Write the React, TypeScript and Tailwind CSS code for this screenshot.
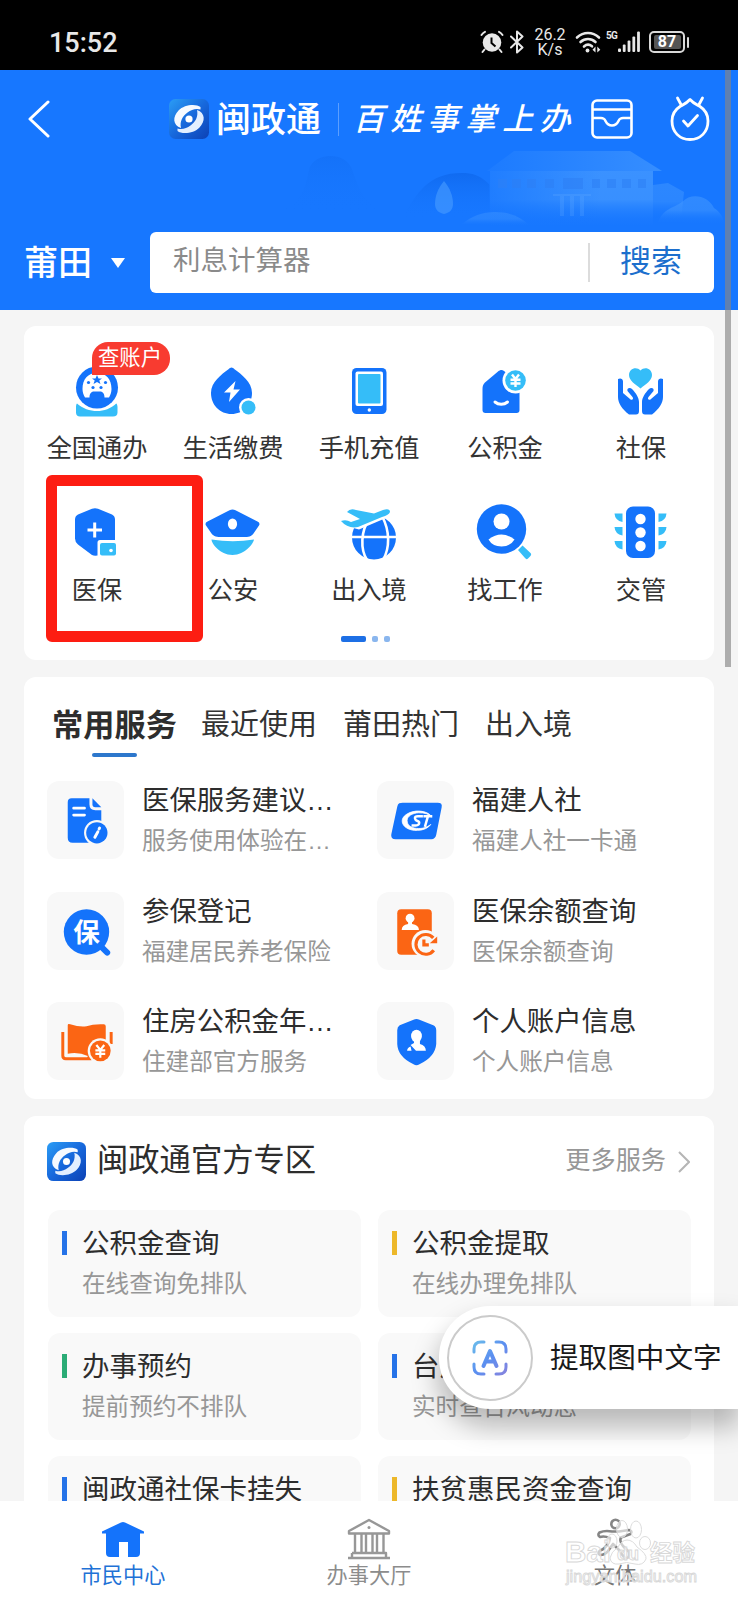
import React from 'react';

const B = '#1473fb';
const C = '#35bdf8';
const O = '#fb6514';

function Logo({ id, className }: { id: string; className: string }) {
  return (
    <svg viewBox="0 0 40 40" className={className}>
      <defs>
        <linearGradient id={id} x1="0" y1="0" x2="1" y2="1">
          <stop offset="0" stopColor="#2b9df5" />
          <stop offset="0.5" stopColor="#1768dc" />
          <stop offset="1" stopColor="#0c41b4" />
        </linearGradient>
      </defs>
      <rect width="40" height="40" rx="6.500" fill={`url(#${id})`} />
      <path d="M31.500 8C27 4.500 15 5.500 9.500 11.500C3.500 18 3.500 26 12 29C10.500 22.500 13.500 17 18.500 13.500C22.500 10.500 27 9 31.500 10.500Z" fill="#f6faff" />
      <path d="M8.500 32C13 35.500 25 34.500 30.500 28.500C36.500 22 36.500 14 28 11C29.500 17.500 26.500 23 21.500 26.500C17.500 29.500 13 31 8.500 29.500Z" fill="#e3efff" />
      <circle cx="20" cy="20" r="3.600" fill="#fff" />
    </svg>
  );
}

function Skyline() {
  return (
    <svg viewBox="0 0 738 240" className="absolute left-0 top-0 h-[240px] w-[738px]">
      <defs>
        <linearGradient id="wall" x1="0" y1="0" x2="0" y2="1">
          <stop offset="0" stopColor="#4a9dff" stopOpacity="0.7" />
          <stop offset="0.5" stopColor="#4a9dff" stopOpacity="0.65" />
          <stop offset="1" stopColor="#1777ff" stopOpacity="0" />
        </linearGradient>
        <linearGradient id="roof" x1="0" y1="0" x2="1" y2="0">
          <stop offset="0" stopColor="#4a9dff" stopOpacity="0.1" />
          <stop offset="1" stopColor="#4a9dff" stopOpacity="0.6" />
        </linearGradient>
        <linearGradient id="side" x1="0" y1="0" x2="1" y2="0">
          <stop offset="0" stopColor="#1777ff" stopOpacity="0.75" />
          <stop offset="1" stopColor="#1777ff" stopOpacity="0" />
        </linearGradient>
        <linearGradient id="hill" x1="0" y1="0" x2="0" y2="1">
          <stop offset="0" stopColor="#0f69ee" />
          <stop offset="1" stopColor="#1777ff" stopOpacity="0" />
        </linearGradient>
      </defs>
      <path d="M272 140C300 138 305 120 309 100C312 88 325 86 331 86C339 86 349 89 353 102C360 122 366 138 390 142Z" fill="url(#hill)" opacity="0.35" />
      <path d="M402 148C418 122 428 103 462 103C482 103 492 112 510 148Z" fill="url(#hill)" opacity="0.85" />
      <path d="M514 81H630L662 101H487Z" fill="url(#roof)" />
      <path d="M490 101H653V158H490Z" fill="url(#wall)" />
      <path d="M653 115L668 113L684 122L681 150H653Z" fill="url(#wall)" opacity="0.6" />
      <path d="M489 101H600V158H489Z" fill="url(#side)" />
      <g fill="#2d7ff5" opacity="0.55">
        <rect x="498" y="109" width="9" height="9" /><rect x="512" y="109" width="9" height="9" />
        <rect x="527" y="109" width="9" height="9" /><rect x="545" y="109" width="9" height="9" />
        <rect x="563" y="108" width="20" height="11" /><rect x="592" y="109" width="8" height="9" />
        <rect x="607" y="109" width="9" height="9" /><rect x="622" y="109" width="9" height="9" />
        <rect x="638" y="109" width="8" height="9" />
      </g>
      <g fill="#69b0ff" opacity="0.22">
        <rect x="553" y="124" width="38" height="2" /><rect x="560" y="126" width="4" height="20" />
        <rect x="570" y="126" width="4" height="20" /><rect x="580" y="126" width="4" height="20" />
      </g>
      <path d="M658 152C664 138 674 138 682 132C692 122 708 126 714 138C720 142 724 148 724 154Z" fill="url(#wall)" opacity="0.7" />
      <path d="M462 154C472 146 482 142 495 142C512 142 522 148 530 156Z" fill="url(#wall)" opacity="0.5" />
      <path d="M444 111C438 118 435 126 435 134C435 140 439 143 444 144C449 143 453 140 453 134C453 126 450 118 444 111Z" fill="#4a9dff" opacity="0.6" />
    </svg>
  );
}

function StatusBar() {
  return (
    <div className="flex h-[70px] items-start bg-black text-[#e8e8e8]">
      <span className="ml-[49px] mt-[26px] font-['Roboto'] text-[27px] font-medium leading-[34px]">15:52</span>
      <div className="ml-auto mr-[49px] mt-[24px] flex h-[36px] items-center">
        <svg viewBox="0 0 24 24" className="h-[24px] w-[24px]" fill="#e8e8e8">
          <circle cx="12" cy="12.500" r="9.300" />
          <path d="M4.500 19.500L2.500 22M19.500 19.500L21.500 22M1.500 5C2.500 3.500 3.500 2.500 5 1.800M22.500 5C21.500 3.500 20.500 2.500 19 1.800" stroke="#e8e8e8" strokeWidth="2" strokeLinecap="round" fill="none" />
          <path d="M11.500 7.500V13L15.500 16.500" stroke="#000" strokeWidth="2" fill="none" />
        </svg>
        <svg viewBox="0 0 14 24" className="ml-[6px] h-[24px] w-[14px]" fill="none" stroke="#e8e8e8" strokeWidth="2" strokeLinejoin="round" strokeLinecap="round">
          <path d="M1 6.500L12.500 17.500L7 22.500V1.500L12.500 6.500L1 17.500" />
        </svg>
        <span className="ml-[10px] flex w-[32px] flex-col text-center font-['Roboto'] text-[16px] leading-[15px]">
          <span>26.2</span><span>K/s</span>
        </span>
        <svg viewBox="0 0 26 24" className="ml-[9px] h-[24px] w-[26px]" fill="none" stroke="#e8e8e8" strokeWidth="2.600" strokeLinecap="round">
          <path d="M2 7.500C8.500 1.500 17.500 1.500 24 7.500M5.500 12C10 8 16 8 20.500 12M9 16.500C11.500 14.200 14.500 14.200 17 16.300" />
          <circle cx="12.500" cy="20.500" r="1.900" fill="#e8e8e8" stroke="none" />
          <path d="M20.500 16.500V22.500L17.500 19.800ZM22.300 16.500V22.500L25.300 19.800Z" fill="#e8e8e8" stroke="none" />
        </svg>
        <span className="-mt-[12px] ml-[5px] w-[12px] font-['Roboto'] text-[10px] font-bold leading-[10px] tracking-[-0.8px]">5G</span>
        <svg viewBox="0 0 22 24" className="h-[24px] w-[22px]" fill="#e8e8e8">
          <rect x="0" y="18.500" width="3" height="3.500" rx="1" /><rect x="4.800" y="14.500" width="2.800" height="7.500" rx="1" />
          <rect x="9.600" y="10.500" width="2.800" height="11.500" rx="1" /><rect x="14.400" y="6.500" width="2.800" height="15.500" rx="1" />
          <rect x="19.100" y="1.500" width="2.800" height="20.500" rx="1" />
        </svg>
        <span className="ml-[9px] flex h-[22px] w-[36px] items-center justify-center rounded-[5px] border-2 border-[#d8d8d8]">
          <span className="flex h-[14px] w-[27px] items-center justify-center rounded-[2px] bg-[#555] font-['Roboto'] text-[16px] font-bold leading-[14px] text-white">87</span>
        </span>
        <span className="ml-[2px] h-[11px] w-[2px] rounded bg-[#d8d8d8]" />
      </div>
    </div>
  );
}

function Header() {
  return (
    <header className="relative h-[240px] bg-[#1777ff] text-white">
      <Skyline />
      <div className="relative flex h-[98px] items-center pl-[28px] pr-[28px]">
        <svg viewBox="0 0 22 38" className="h-[38px] w-[22px]" fill="none" stroke="#fff" strokeWidth="3" strokeLinecap="round" strokeLinejoin="round">
          <path d="M20 2L2 19L20 36" />
        </svg>
        <Logo id="logo-top" className="ml-[119px] h-[40px] w-[40px]" />
        <span className="ml-[7px] -mt-[4px] text-[35px] font-medium leading-[44px]">闽政通</span>
        <span className="ml-[17px] h-[33px] w-px bg-[#5c9fff]" />
        <span className="ml-[14px] mt-[2px] w-[226px] whitespace-nowrap font-['Liberation_Serif','Noto_Sans_CJK_SC',serif] text-[31px] font-medium italic leading-[40px] tracking-[6.300px]">百姓事掌上办</span>
        <svg viewBox="0 0 42 40" className="ml-[12px] h-[40px] w-[42px]" fill="none" stroke="#fff" strokeWidth="2.600" strokeLinejoin="round">
          <rect x="1.500" y="1.500" width="39" height="37" rx="4.500" />
          <path d="M1.500 10.500H40.500M1.500 19H10C13 19 13.500 20 14.500 22C16 25 18 26.500 21 26.500C24 26.500 26 25 27.500 22C28.500 20 29 19 32 19H40.500" />
        </svg>
        <svg viewBox="0 0 40 46" className="ml-auto h-[46px] w-[40px]" fill="none" stroke="#fff" strokeWidth="2.800" strokeLinecap="round" strokeLinejoin="round">
          <path d="M20 3.500C17 7 13.500 8.500 10 10.500C4.500 14 2 19 2 25C2 36 9.500 43.500 20 43.500C30.500 43.500 38 36 38 25C38 19 35.500 14 30 10.500C26.500 8.500 23 7 20 3.500Z" />
          <path d="M7.500 2L11 8.500M32.500 2L29 8.500M13.500 25L18 30L27.500 19.500" />
        </svg>
      </div>
      <div className="relative mt-[64px] flex h-[61px] items-center pl-[24px] pr-[24px]">
        <span className="-mt-[4px] w-[68px] whitespace-nowrap text-[34px] font-medium leading-[44px]">莆田</span>
        <svg viewBox="0 0 14 10" className="ml-[19px] h-[10px] w-[14px]" fill="#fff"><path d="M0 0H14L7 10Z" /></svg>
        <div className="ml-[25px] flex h-[61px] w-[564px] items-center rounded-[6px] bg-white">
          <span className="-mt-[9px] ml-[23px] text-[27.500px] leading-[36px] text-[#8a8a8a]">利息计算器</span>
          <span className="ml-auto h-[39px] w-[2px] bg-[#dcdcdc]" />
          <span className="-mt-[7px] ml-[30px] mr-[32px] text-[31px] leading-[40px] text-[#1c6fcd]">搜索</span>
        </div>
      </div>
    </header>
  );
}

const main: { label: string; icon: React.ReactNode }[] = [
  {
    label: '全国通办',
    icon: (
      <>
        <path d="M9 38.500C8.300 39 8 40.500 8 42V47.500C8 50 9.500 51.500 12 51.500H45C48 51.500 49.500 50 49.500 47.500V42C49.500 40.500 49 39 48.300 38.500C43 43.500 36 46 29 46C22 46 14.500 43.500 9 38.500Z" fill={C} />
        <circle cx="29" cy="22.500" r="21" fill={B} />
        <path d="M14.500 24C14.500 14 20 8 29 8C38 8 43.500 14 43.500 24C43.500 27 42.500 30 41 32.500H36.500C36.500 29 35 26.500 32 26.500H26C23 26.500 21.500 29 21.500 32.500H17C15.500 30 14.500 27 14.500 24Z" fill="#fff" />
        <path d="M29 10L30.500 13.500H34L31.300 15.500L32.500 19L29 17L25.500 19L26.700 15.500L24 13.500H27.500Z" fill={B} />
        <circle cx="20.500" cy="17.500" r="1.600" fill={B} /><circle cx="37.500" cy="17.500" r="1.600" fill={B} />
        <circle cx="25" cy="22.500" r="1.600" fill={B} /><circle cx="33" cy="22.500" r="1.600" fill={B} />
      </>
    ),
  },
  {
    label: '生活缴费',
    icon: (
      <>
        <path d="M27.500 2.500C28.500 2.500 29.500 3.300 30.500 4.300C37.500 9.500 48 17 48 28C48 40 39 49 27.500 49C16 49 7 40 7 28C7 17 17.500 9.500 24.500 4.300C25.500 3.300 26.500 2.500 27.500 2.500Z" fill={B} />
        <path d="M31.500 16L20 27.500H26.500L25 37L36 24.500H29.500Z" fill="#fff" />
        <circle cx="44.500" cy="42.500" r="9.500" fill="#fff" /><circle cx="44.500" cy="42.500" r="7" fill={C} />
      </>
    ),
  },
  {
    label: '手机充值',
    icon: (
      <>
        <rect x="12" y="3" width="34.500" height="46" rx="4.500" fill={B} />
        <rect x="15.500" y="6.500" width="27.500" height="34.500" rx="2" fill="#fff" />
        <rect x="18" y="9" width="22.500" height="29.500" rx="1" fill={C} />
        <circle cx="29.300" cy="45" r="1.700" fill="#fff" />
      </>
    ),
  },
  {
    label: '公积金',
    icon: (
      <>
        <path d="M6.500 24C6.500 21 7 19.500 9 17.500L22 6.500C24.500 4.500 26 4.500 28 6L43.500 18V45C43.500 47 42.500 48 40.500 48H9.500C7.500 48 6.500 47 6.500 45Z" fill={B} />
        <path d="M19 37C22.500 40 28 40 31.500 37" stroke="#fff" strokeWidth="3" strokeLinecap="round" fill="none" />
        <circle cx="39.500" cy="15.500" r="13" fill="#fff" /><circle cx="39.500" cy="15.500" r="10.300" fill={C} />
        <path d="M36 9.500L39.500 14L43 9.500M34.500 14.800H44.500M34.500 18.500H44.500M39.500 14V22" stroke="#fff" strokeWidth="2.400" fill="none" />
      </>
    ),
  },
  {
    label: '社保',
    icon: (
      <>
        <path d="M28.500 23.500C23 19 17 15.500 17 10C17 3.500 24.500 1 28.500 5.500C32.500 1 40 3.500 40 10C40 15.500 34 19 28.500 23.500Z" fill={C} />
        <path d="M6 14C8.500 12.500 11 14 11 16.500V28L18 34C20 36 22 34 20.500 32L15.500 26C14.500 23 18 22 20 24C24 28 27 33 27 37V46C27 48.500 26 49.500 24 49.500H17C10 44 6 38 6 32Z" fill={B} />
        <path d="M51 14C48.500 12.500 46 14 46 16.500V28L39 34C37 36 35 34 36.500 32L41.500 26C42.500 23 39 22 37 24C33 28 30 33 30 37V46C30 48.500 31 49.500 33 49.500H40C47 44 51 38 51 32Z" fill={B} />
      </>
    ),
  },
  {
    label: '医保',
    icon: (
      <>
        <path d="M24 1.800Q27 0.500 30 1.800L44 7.500Q47 9 47 12.500V33H32Q29.500 33 29.500 35.500V48.500Q26 49 24 48L10 37.500Q7 35 7 31.500V12.500Q7 9 10 7.500Z" fill={B} />
        <path d="M19.500 23H34M26.700 15.500V30.500" stroke="#fff" strokeWidth="3" />
        <rect x="32" y="36" width="16" height="12.500" rx="2" fill={C} /><circle cx="43" cy="43.500" r="1.800" fill="#fff" />
      </>
    ),
  },
  {
    label: '公安',
    icon: (
      <>
        <path d="M25.500 3.200Q28.500 1.800 31.500 3.200L53.500 14.500Q56.500 16 55 18.500L49.500 26.500C47.500 29.500 44.500 30 39.500 30H17.500C13.500 30 9.500 29.500 7.500 26.500L2 18.500Q0.500 16 3.500 14.500Z" fill={B} />
        <path d="M7.500 32.500Q29 36 50 32.500C49.500 36 41.500 48 28.500 48C15.500 48 7.500 36 7.500 32.500Z" fill={C} />
        <ellipse cx="28.500" cy="17" rx="4.600" ry="5.500" fill="#fff" />
      </>
    ),
  },
  {
    label: '出入境',
    icon: (
      <>
        <circle cx="34" cy="30.500" r="22" fill={B} />
        <path d="M10 30H58M27 53C20 42 21 24 29 12M43 53C50 41 50 24 42 9" stroke="#fff" strokeWidth="2.600" fill="none" />
        <path d="M2 18L48 0L53 8L19 22.500Z" fill="#fff" />
        <path d="M1 14Q6 12 11 15L20 12L7 5Q10 1 16 3L34 6.500L43 3Q50 1 50 5Q49 8 42 10L18 20Q8 22 1 14Z" fill={C} />
      </>
    ),
  },
  {
    label: '找工作',
    icon: (
      <>
        <circle cx="25.500" cy="22" r="24.700" fill={B} /><circle cx="25.500" cy="14.500" r="8" fill="#fff" />
        <path d="M12.500 32.500Q25.500 22.500 38.500 32.500Q34.500 39.500 25.500 39.500Q16.500 39.500 12.500 32.500Z" fill="#fff" />
        <path d="M42 43L46.500 38.500L54.500 46Q56 47.500 54 49.500L52 51.500Q50.500 53 49 51Z" fill={C} />
      </>
    ),
  },
  {
    label: '交管',
    icon: (
      <>
        <rect x="14" y="-0.500" width="29" height="51.500" rx="7" fill={B} />
        <circle cx="28.500" cy="12" r="5.200" fill="#fff" /><circle cx="28.500" cy="25.500" r="5.200" fill="#fff" /><circle cx="28.500" cy="39" r="5.200" fill="#fff" />
        <path d="M2.500 6.500H10.500V15Q3 13.500 2.500 6.500ZM2.500 20H10.500V28.500Q3 27 2.500 20ZM2.500 34H10.500V42.500Q3 41 2.500 34ZM54.500 6.500H46.500V15Q54 13.500 54.500 6.500ZM54.500 20H46.500V28.500Q54 27 54.500 20ZM54.500 34H46.500V42.500Q54 41 54.500 34Z" fill={C} />
      </>
    ),
  },
];

function MainServices() {
  return (
    <section className="relative mx-[24px] mt-[16px] h-[334px] rounded-[12px] bg-white px-[5px] pt-[39px]">
      <div className="grid grid-cols-5 gap-y-[42px]">
        {main.map((m) => (
          <div key={m.label} className="flex h-[100px] flex-col items-center">
            <svg viewBox="0 0 58 58" className="h-[58px] w-[58px] overflow-visible">{m.icon}</svg>
            <span className="mt-[5px] whitespace-nowrap text-[25.200px] leading-[36px] text-[#333]">{m.label}</span>
          </div>
        ))}
      </div>
      <div className="mt-[29px] flex items-center justify-center gap-[6px] pr-[7px]">
        <span className="h-[6px] w-[25px] rounded-[2px] bg-[#1d6fe5]" />
        <span className="h-[6px] w-[6px] rounded-[2px] bg-[#8ab6ee]" />
        <span className="h-[6px] w-[6px] rounded-[2px] bg-[#8ab6ee]" />
      </div>
      <span className="absolute left-[68px] top-[16px] flex h-[33px] w-[78px] items-start justify-center rounded-[16px] rounded-bl-none bg-[#f83b30] pr-[2px] text-[21.300px] leading-[27px] text-white">查账户</span>
      <span className="absolute left-[22px] top-[149px] h-[167px] w-[157px] rounded-[6px] border-[11px] border-[#fd1d12]" />
    </section>
  );
}

const common: { title: string; sub: string; icon: React.ReactNode }[] = [
  {
    title: '医保服务建议…', sub: '服务使用体验在…',
    icon: (
      <>
        <path d="M25 17H43V23Q43 29 49 29H55V62H26Q21 62 21 57V21Q21 17 25 17Z" fill={B} />
        <path d="M46 17L55 26H49Q46 26 46 23Z" fill={B} />
        <path d="M27 27H38M27 34H38" stroke="#fff" strokeWidth="2.800" strokeLinecap="round" />
        <circle cx="50.500" cy="52" r="13" fill="#f8f8f8" /><circle cx="50.500" cy="52" r="10.800" fill={B} />
        <path d="M48.500 56.500L51.500 51M52.800 48L53.200 47.200" stroke="#fff" strokeWidth="3" strokeLinecap="round" />
      </>
    ),
  },
  {
    title: '福建人社', sub: '福建人社一卡通',
    icon: (
      <>
        <path d="M22.500 22Q23.500 21.500 26 21.500H61.500Q66.500 21.500 65.500 26L60 54Q59 58.500 55 58.500H19Q13.500 58.500 14.500 53.500L20.500 25.500Q21 23 22.500 22Z" fill={B} />
        <path d="M55.500 36C53 31.500 46 29.500 39.500 30C31 31 25.500 35.500 25.500 40C25.500 46 33 50 41 49.500C47 49.500 52 47 54.500 43.500C50 47 45 48 40 47.500C34 47 30.500 44 30.500 39.500C30.500 35 36 32 42 31.700C48 31.500 52.500 33 55.500 36Z" fill="#fff" stroke="#fff" strokeWidth="0.800" />
        <path d="M46.500 35.200H41.500Q38 35.200 38.500 37.500Q38.800 39.300 41 40Q43.500 40.900 42.500 43Q41.500 45 35 44.600M47 35.200H56M51.500 35.500L48.500 46" stroke="#fff" strokeWidth="2.500" fill="none" />
      </>
    ),
  },
  {
    title: '参保登记', sub: '福建居民养老保险',
    icon: (
      <>
        <circle cx="40" cy="40" r="23" fill={B} />
        <path d="M52 52L61 61" stroke={B} strokeWidth="6" strokeLinecap="round" />
        <text x="40" y="50" textAnchor="middle" fontSize="27" fontWeight="700" fill="#fff" fontFamily="Noto Sans CJK SC">保</text>
      </>
    ),
  },
  {
    title: '医保余额查询', sub: '医保余额查询',
    icon: (
      <>
        <rect x="20.500" y="17" width="35" height="46" rx="4" fill={O} />
        <circle cx="33.500" cy="26" r="4.500" fill="#fff" /><path d="M31.500 28H35.500V32Q42.500 33 42.500 38H25Q25 33 31.500 32Z" fill="#fff" />
        <circle cx="49" cy="52" r="14" fill="#f8f8f8" />
        <path d="M57 46A10 10 0 1 0 57.500 58.500" fill="none" stroke={O} strokeWidth="3.200" />
        <path d="M61 44.500V51.500H53.500Z" fill={O} />
        <path d="M47.500 47.500V53H52.500" fill="none" stroke={O} strokeWidth="3.200" />
      </>
    ),
  },
  {
    title: '住房公积金年…', sub: '住建部官方服务',
    icon: (
      <>
        <path d="M16 30V54Q16 57 19 57H45L41 55M65 30V42" stroke={O} strokeWidth="3" fill="none" />
        <path d="M21 23Q21 21 23.500 22Q33 25 40 24Q47 21.500 57.500 22Q59.500 22 59.500 24V52Q50 57 42 54.500Q31 49.500 21 52Z" fill={O} />
        <circle cx="54" cy="49" r="12.800" fill="#f8f8f8" /><circle cx="54" cy="49" r="10.500" fill={O} />
        <path d="M50 43L54 48L58 43M49 48.500H59M49 52H59M54 48V56" stroke="#fff" strokeWidth="2.200" fill="none" />
      </>
    ),
  },
  {
    title: '个人账户信息', sub: '个人账户信息',
    icon: (
      <>
        <path d="M37 17.500Q40 16 43 17.500L57 23Q60 24.500 60 28V42Q59 55 43 62.500Q40 64.500 37 62.500Q21 55 20.500 42V28Q20.500 24.500 23 23Z" fill={B} />
        <ellipse cx="40" cy="34" rx="5.500" ry="6.500" fill="#fff" />
        <path d="M37.500 37H43.500V42Q49.500 43.500 49.500 49H39.500L34 43L37.500 41ZM34 44.500L35 49H30.500Q30.500 46 34 44.500Z" fill="#fff" />
      </>
    ),
  },
];

function CommonServices() {
  return (
    <section className="mx-[24px] mt-[17px] h-[422px] rounded-[12px] bg-white pl-[23px] pr-[22px]">
      <div className="flex h-[104px] whitespace-nowrap pl-[5px] pt-[25px] text-[29px] leading-[40px] text-[#333]">
        <div className="flex w-[125px] flex-col items-center">
          <span className="text-[31.200px] font-bold leading-[42px] text-[#2d2d2d]">常用服务</span>
          <span className="mt-[9px] h-[4px] w-[45px] rounded bg-[#2d77cc]" />
        </div>
        <span className="ml-[24px]">最近使用</span>
        <span className="ml-[26px]">莆田热门</span>
        <span className="ml-[26px]">出入境</span>
      </div>
      <div className="grid grid-cols-[330px_1fr] gap-y-[32.700px]">
        {common.map((c) => (
          <div key={c.title} className="flex h-[78px] items-start whitespace-nowrap font-['Liberation_Sans','Noto_Sans_CJK_SC',sans-serif]">
            <span className="flex h-[78px] w-[77px] shrink-0 rounded-[12px] bg-[#f8f8f8]">
              <svg viewBox="0 0 78 78" className="h-[78px] w-[78px]">{c.icon}</svg>
            </span>
            <span className="ml-[18px] flex flex-col">
              <span className="mt-[2px] text-[27.400px] leading-[36px] text-[#2d2d2d]">{c.title}</span>
              <span className="mt-[6px] text-[23.600px] leading-[32px] text-[#979797]">{c.sub}</span>
            </span>
          </div>
        ))}
      </div>
    </section>
  );
}

const official = [
  { title: '公积金查询', sub: '在线查询免排队', bar: 'bg-[#2673e8]' },
  { title: '公积金提取', sub: '在线办理免排队', bar: 'bg-[#edb82a]' },
  { title: '办事预约', sub: '提前预约不排队', bar: 'bg-[#2bac76]' },
  { title: '台风路径', sub: '实时查台风动态', bar: 'bg-[#2673e8]' },
  { title: '闽政通社保卡挂失', sub: '', bar: 'bg-[#2673e8]' },
  { title: '扶贫惠民资金查询', sub: '', bar: 'bg-[#edb82a]' },
];

function Official() {
  return (
    <section className="mx-[24px] mt-[17px] h-[500px] shrink-0 rounded-[12px] bg-white px-[23px]">
      <div className="flex h-[94px] items-start pt-[26px]">
        <Logo id="logo-zone" className="h-[39px] w-[39px]" />
        <span className="-mt-[6px] ml-[11px] text-[31.300px] leading-[44px] text-[#2d2d2d]">闽政通官方专区</span>
        <span className="-mt-[2px] ml-auto text-[25.200px] leading-[36px] text-[#979797]">更多服务</span>
        <svg viewBox="0 0 12 22" className="ml-[12px] mr-[1px] mt-[9px] h-[22px] w-[12px]" fill="none" stroke="#b5b5b5" strokeWidth="2"><path d="M1 1L11 11L1 21" /></svg>
      </div>
      <div className="grid grid-cols-[313px_313px] gap-x-[17px] gap-y-[16px] pl-px">
        {official.map((o) => (
          <div key={o.title} className="flex h-[107px] items-start whitespace-nowrap rounded-[12px] bg-[#f9f9f9] pl-[14px]">
            <span className={`mt-[21px] h-[24px] w-[5px] ${o.bar}`} />
            <span className="ml-[15px] flex flex-col">
              <span className="mt-[13px] text-[27.500px] leading-[36px] text-[#2d2d2d]">{o.title}</span>
              {o.sub && <span className="mt-[7px] text-[23.600px] leading-[32px] text-[#979797]">{o.sub}</span>}
            </span>
          </div>
        ))}
      </div>
    </section>
  );
}

function Nav() {
  return (
    <nav className="relative grid h-[99px] grid-cols-3 bg-white text-[21.200px] leading-[30px] text-[#8c8c8c]">
      <div className="flex flex-col items-center pt-[20px] text-[#1f72d6]">
        <svg viewBox="0 0 44 37" className="h-[37px] w-[44px]" fill={B}><path d="M20 1.500Q22 0.500 24 1.500L43 10.500V12.500H39V32Q39 36 35 36H27V21H18V36H9Q5 36 5 32V12.500H1V10.500Z" /></svg>
        <span className="mt-px">市民中心</span>
      </div>
      <div className="flex flex-col items-center pt-[17px]">
        <svg viewBox="0 0 44 42" className="h-[42px] w-[44px]" fill="none" stroke="#979797" strokeWidth="2.400" strokeLinejoin="round">
          <path d="M22 2L42 13V15.500H2V13ZM8 16V35M14.500 16V35M19 16V35M25.500 16V35M30 16V35M36.500 16V35M5 35H39V39.500M5 35V39.500M1 40H43" />
          <circle cx="22" cy="9.500" r="1.500" fill="#979797" stroke="none" />
        </svg>
        <span className="-mt-px">办事大厅</span>
      </div>
      <div className="flex flex-col items-center pt-[17px]">
        <svg viewBox="0 0 38 42" className="h-[42px] w-[38px]" fill="none" stroke="#858585" strokeWidth="2.600" strokeLinecap="round" strokeLinejoin="round">
          <circle cx="19.500" cy="6" r="4.200" />
          <path d="M4 19Q1 17 3.500 14.500Q9 12 16 13.500H23L33 12Q37 13 34.500 16L25 19.500Q23 23 27 28L33 34Q34 41 29 40Q26 37 23 32L17 26L12 33Q9 37 4 37Q1 35 4 32.500Q9 31 13 24L14 20Q8 17.500 4 19Z" />
        </svg>
        <span className="-mt-px text-[#777]">文体</span>
      </div>
      <svg viewBox="0 0 136 76" className="absolute left-[564px] top-[17px] h-[76px] w-[136px]" fill="#fff" fillOpacity="0.6" stroke="#d8d8d8" strokeWidth="0.900">
        <text x="1" y="43.500" fontSize="29" fontWeight="700" fontFamily="Liberation Sans" textLength="46" lengthAdjust="spacingAndGlyphs">Bai</text>
        <ellipse cx="48" cy="23" rx="5" ry="7" /><ellipse cx="58" cy="11" rx="5.500" ry="8.500" /><ellipse cx="72" cy="11.500" rx="5.500" ry="8.500" /><ellipse cx="81" cy="25" rx="5.500" ry="6.500" />
        <path d="M63 22Q69 22 73 29Q83 36 82 41Q79 48 71 46Q62 43 55 46Q47 47 46 40Q47 34 54 29Q58 22 63 22Z" />
        <text x="53" y="42" fontSize="18" fontWeight="700" fontFamily="Liberation Sans" textLength="22">du</text>
        <text x="86" y="43" fontSize="22.500" fontWeight="700" fontFamily="Noto Sans CJK SC">经验</text>
        <text x="2" y="64" fontSize="16" fontFamily="Liberation Sans" textLength="131" lengthAdjust="spacingAndGlyphs">jingyan.baidu.com</text>
      </svg>
    </nav>
  );
}

function ExtractPopup() {
  return (
    <div className="absolute left-[439px] top-[1306px] flex h-[103px] w-[299px] items-center rounded-l-[51px] bg-white pl-[8px] shadow-[0_16px_26px_2px_rgba(0,0,0,0.26)]">
      <span className="flex h-[86px] w-[86px] items-center justify-center rounded-full border-2 border-[#cbcbcb]">
        <svg viewBox="0 0 36 36" className="h-[36px] w-[36px]" fill="none" stroke="url(#scan)" strokeWidth="3" strokeLinecap="round">
          <defs>
            <linearGradient id="scan" gradientUnits="userSpaceOnUse" x1="0" y1="0" x2="36" y2="36"><stop offset="0" stopColor="#6cc0ea" /><stop offset="0.5" stopColor="#5b8ff0" /><stop offset="1" stopColor="#8a82dc" /></linearGradient>
          </defs>
          <path d="M2 12V9Q2 2 9 2H12M24 2H27Q34 2 34 9V12M34 24V27Q34 34 27 34H24M12 34H9Q2 34 2 27V24" />
          <path d="M11.500 26L18 11L24.500 26M14 21.500H22" strokeWidth="4" strokeLinejoin="round" />
        </svg>
      </span>
      <span className="-mt-[4px] ml-[17px] whitespace-nowrap text-[28.600px] leading-[40px] text-[#1a1a1a]">提取图中文字</span>
    </div>
  );
}

export default function App() {
  return (
    <div className="relative flex h-[1600px] w-[738px] flex-col overflow-hidden bg-[#f5f5f5] font-['Noto_Sans_CJK_SC',sans-serif]">
      <StatusBar />
      <Header />
      <main className="h-[1191px] shrink-0 overflow-hidden">
        <MainServices />
        <CommonServices />
        <Official />
      </main>
      <Nav />
      <span className="absolute left-[725px] top-[70px] h-[597px] w-[6px] bg-[rgba(134,134,134,0.65)]" />
      <ExtractPopup />
    </div>
  );
}
